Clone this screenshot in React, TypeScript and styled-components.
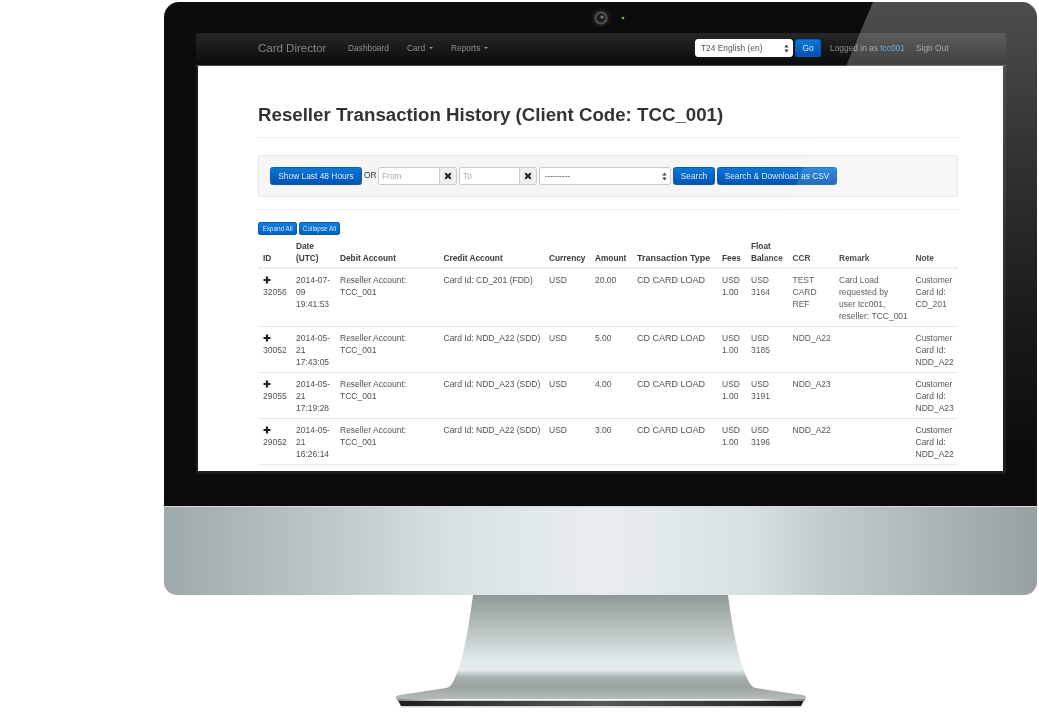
import React from "react";
import styled, { createGlobalStyle } from "styled-components";

const Global = createGlobalStyle`
  html, body { margin: 0; padding: 0; background: #fff; }
  body { font-family: "Liberation Sans", Arial, sans-serif; color: #333; }
`;
const Scene = styled.div`width: 1039px; height: 713px; padding: 2px 0 0 164px; box-sizing: border-box; overflow: hidden; display: flex; flex-direction: column;`;
const Monitor = styled.div`position: relative; width: 873px; display: flex; flex-direction: column;`;
const Bezel = styled.div`height: 505px; box-sizing: border-box; background: #0c0c0c; border-radius: 15px 15px 0 0; display: flex; flex-direction: column; align-items: center; border-bottom: 1px solid #d5dcdc;`;
const CameraBar = styled.div`height: 31px; flex: none; width: 100%; display: flex; justify-content: center; align-items: center;`;
const Gloss = styled.svg`position: absolute; left: 0; top: 0; pointer-events: none;`;
const ScreenFrame = styled.div`width: 810px; margin-left: 1px; height: 441px; flex: none; box-sizing: border-box; background: #1c1c1c; border-radius: 3px 3px 0 0; padding: 0 3px 3px 2px; display: flex; flex-direction: column;`;
const NavBar = styled.div`height: 33px; flex: none; margin: 0 -3px 0 -2px; padding: 0 0 2px 62px; background: linear-gradient(#262626, #0b0b0b); border-radius: 3px 3px 0 0; border-bottom: 1px solid #4c4c4c; box-sizing: border-box; display: flex; align-items: center; font-size: 8.4px; color: #8f8f8f; filter: blur(.25px);`;
const Brand = styled.span`font-size: 11.5px; color: #858585; width: 90px;`;
const NavLink = styled.span<{ $w: number }>`width: ${p => p.$w}px; display: inline-flex; align-items: center; gap: 4px;`;
const Caret = styled.i`width: 0; height: 0; border-left: 2.5px solid transparent; border-right: 2.5px solid transparent; border-top: 2.5px solid #999;`;
const Spacer = styled.div`flex: 1;`;
const SelectBox = styled.div<{ $w: number; $h: number }>`width: ${p => p.$w}px; height: ${p => p.$h}px; box-sizing: border-box; background: #fff; border: 1px solid #ccc; border-radius: 3px; display: flex; align-items: center; justify-content: space-between; padding: 0 3px 0 5px; font-size: 8.4px; color: #555; flex: none;`;
const NavSelect = styled(SelectBox)`border-color: #fff;`;
const Btn = styled.div<{ $w: number }>`width: ${p => p.$w}px; height: 18px; flex: none; box-sizing: border-box; display: flex; align-items: center; justify-content: center; font-size: 8.4px; color: #dcebf8; background: linear-gradient(#0a78d8, #0052b4); border: 1px solid #0a5cb0; border-radius: 2.5px;`;
const GoBtn = styled(Btn)`margin: 0 9px 0 2px;`;
const NavUser = styled.span`white-space: nowrap; width: 86px;`;
const UserLink = styled.span`color: #2d9bd0;`;
const NavEnd = styled.span`margin-right: 58px; width: 32px; white-space: nowrap;`;
const Page = styled.div`flex: 1; background: #fff; overflow: hidden; padding: 0 45px 0 60px; filter: blur(.25px);`;
const Title = styled.h1`margin: 0; padding: 37px 0 10px; height: 72px; box-sizing: border-box; border-bottom: 1px solid #eee; font-size: 18.7px; line-height: 24px; font-weight: 700; color: #333; white-space: nowrap;`;
const Well = styled.div`margin-top: 17px; height: 42px; box-sizing: border-box; background: #f5f5f5; border: 1px solid #e6e6e6; border-radius: 3px; padding: 11px 0 0 11px; display: flex; align-items: flex-start; gap: 2px;`;
const OrText = styled.span`font-size: 8.4px; line-height: 17px; color: #333; width: 12px; text-align: center; flex: none;`;
const InputGroup = styled.div<{ $w: number }>`width: ${p => p.$w}px; height: 18px; flex: none; display: flex; box-sizing: border-box; border: 1px solid #ccc; border-radius: 2.5px; background: #fff; overflow: hidden;`;
const InputText = styled.span`flex: 1; padding-left: 3px; font-size: 8.4px; line-height: 16px; color: #aaa;`;
const Addon = styled.span`width: 16px; background: #eee; border-left: 1px solid #ccc; display: flex; align-items: center; justify-content: center; flex: none;`;
const Rule = styled.div`margin-top: 12px; border-top: 1px solid #eee;`;
const SmallRow = styled.div`margin-top: 12px; display: flex; gap: 2px;`;
const SmallBtn = styled(Btn)`height: 13px; font-size: 6.4px; border-radius: 2px; background: linear-gradient(#1280dc, #0060c0); color: #cfe4f7;`;
const Table = styled.table`width: 700px; table-layout: fixed; border-collapse: collapse; font-size: 8.5px; line-height: 12px; margin-top: 2px; color: #505050;`;
const Th = styled.th<{ $wide: boolean }>`text-align: left; vertical-align: bottom; padding: 3px 0 3px 5px; font-weight: 700; font-size: ${p => (p.$wide ? 9 : 8.3)}px; color: #3a3a3a; border-bottom: 2px solid #eee;`;
const Td = styled.td<{ $wide: boolean }>`vertical-align: top; padding: 5px 0 4px 5px; font-size: ${p => (p.$wide ? 9 : 8.5)}px; border-bottom: 1px solid #e8e8e8; word-wrap: break-word; white-space: pre-line;`;
const PlusBox = styled.div`height: 12px; display: flex; align-items: center;`;
const Chin = styled.div`height: 88px; flex: none; border-radius: 0 0 13px 13px; background: linear-gradient(90deg, #a0a9aa 0%, #b8c1c2 15%, #d8e0e1 33%, #e8eef0 50%, #d8e0e1 67%, #c0c9ca 77%, #98a1a1 100%);`;
const Stand = styled.svg`display: block; margin-left: 232px; flex: none;`;
const Col = styled.col<{ $w: number }>`width: ${p => p.$w}px;`;

const colWidths = [33, 44, 103.5, 105.5, 46, 42, 85, 29, 41.5, 46.5, 76.5, 47.5];
const headers = ["ID", "Date (UTC)", "Debit Account", "Credit Account", "Currency", "Amount", "Transaction Type", "Fees", "Float Balance", "CCR", "Remark", "Note"];
const rows = [
  ["32056", "2014-07-09 19:41:53", "Reseller Account: TCC_001", "Card Id: CD_201 (FDD)", "USD", "20.00", "CD CARD LOAD", "USD 1.00", "USD 3164", "TEST CARD REF", "Card Load\nrequested by\nuser tcc001,\nreseller: TCC_001", "Customer Card Id: CD_201"],
  ["30052", "2014-05-21 17:43:05", "Reseller Account: TCC_001", "Card Id: NDD_A22 (SDD)", "USD", "5.00", "CD CARD LOAD", "USD 1.00", "USD 3185", "NDD_A22", "", "Customer Card Id: NDD_A22"],
  ["29055", "2014-05-21 17:19:28", "Reseller Account: TCC_001", "Card Id: NDD_A23 (SDD)", "USD", "4.00", "CD CARD LOAD", "USD 1.00", "USD 3191", "NDD_A23", "", "Customer Card Id: NDD_A23"],
  ["29052", "2014-05-21 16:26:14", "Reseller Account: TCC_001", "Card Id: NDD_A22 (SDD)", "USD", "3.00", "CD CARD LOAD", "USD 1.00", "USD 3196", "NDD_A22", "", "Customer Card Id: NDD_A22"],
];

const UpDown = () => (
  <svg width="5" height="9" viewBox="0 0 5 9"><path d="M2.5 0.5L4.7 3.5H.3zM2.5 8.5L.3 5.5H4.7z" fill="#444" /></svg>
);
const Cross = () => (
  <svg width="8" height="8" viewBox="0 0 8 8"><path d="M1.2 1.2L6.8 6.8M6.8 1.2L1.2 6.8" stroke="#222" strokeWidth="2.1" /></svg>
);
const Plus = () => (
  <svg width="8" height="8" viewBox="0 0 8 8"><path d="M4 .5V7.5M.5 4H7.5" stroke="#222" strokeWidth="2.2" /></svg>
);

export default function App() {
  return (
    <Scene>
      <Global />
      <Monitor>
        <Bezel>
          <CameraBar>
            <svg width="60" height="31" viewBox="0 0 60 31">
              <defs>
                <radialGradient id="lens" cx=".5" cy=".5" r=".5">
                  <stop offset="0" stopColor="#151515" />
                  <stop offset=".55" stopColor="#222" />
                  <stop offset=".78" stopColor="#565656" />
                  <stop offset="1" stopColor="#2e2e2e" />
                </radialGradient>
              </defs>
              <circle cx="30" cy="16" r="10" fill="#161616" />
              <circle cx="30" cy="16" r="7" fill="url(#lens)" />
              <circle cx="31" cy="15" r="1.6" fill="#7c7c7c" />
              <circle cx="52" cy="16" r="1.3" fill="#6fc21c" />
            </svg>
          </CameraBar>
          <ScreenFrame>
            <NavBar>
              <Brand>Card Director</Brand>
              <NavLink $w={59}>Dashboard</NavLink>
              <NavLink $w={44}>Card <Caret /></NavLink>
              <NavLink $w={50}>Reports <Caret /></NavLink>
              <Spacer />
              <NavSelect $w={98} $h={18}>T24 English (en)<UpDown /></NavSelect>
              <GoBtn $w={26}>Go</GoBtn>
              <NavUser>Logged in as <UserLink>tcc001</UserLink></NavUser>
              <NavEnd>Sign Out</NavEnd>
            </NavBar>
            <Page>
              <Title>Reseller Transaction History (Client Code: TCC_001)</Title>
              <Well>
                <Btn $w={92}>Show Last 48 Hours</Btn>
                <OrText>OR</OrText>
                <InputGroup $w={79}><InputText>From</InputText><Addon><Cross /></Addon></InputGroup>
                <InputGroup $w={78}><InputText>To</InputText><Addon><Cross /></Addon></InputGroup>
                <SelectBox $w={132} $h={18}>---------<UpDown /></SelectBox>
                <Btn $w={42}>Search</Btn>
                <Btn $w={120}>Search &amp; Download as CSV</Btn>
              </Well>
              <Rule />
              <SmallRow>
                <SmallBtn $w={39}>Expand All</SmallBtn>
                <SmallBtn $w={41}>Collapse All</SmallBtn>
              </SmallRow>
              <Table>
                <colgroup>{colWidths.map((w, i) => <Col key={i} $w={w} />)}</colgroup>
                <thead>
                  <tr>{headers.map((h, i) => <Th key={h} $wide={i === 6}>{h}</Th>)}</tr>
                </thead>
                <tbody>
                  {rows.map(r => (
                    <tr key={r[0]}>
                      {r.map((c, i) => (
                        <Td key={i} $wide={i === 6}>{i === 0 && <PlusBox><Plus /></PlusBox>}{c}</Td>
                      ))}
                    </tr>
                  ))}
                </tbody>
              </Table>
            </Page>
          </ScreenFrame>
        </Bezel>
        <Chin />
        <Gloss width="873" height="505" viewBox="0 0 873 505">
          <defs>
            <linearGradient id="gl" x1="0" y1="0" x2="0" y2="1">
              <stop offset="0" stopColor="#fff" stopOpacity=".27" />
              <stop offset=".3" stopColor="#fff" stopOpacity=".16" />
              <stop offset=".62" stopColor="#fff" stopOpacity=".06" />
              <stop offset=".9" stopColor="#fff" stopOpacity="0" />
            </linearGradient>
          </defs>
          <path d="M709 0H858Q873 0 873 15V503H497Z" fill="url(#gl)" />
        </Gloss>
      </Monitor>
      <Stand width="410" height="116" viewBox="0 0 410 116">
        <defs>
          <linearGradient id="neck" x1="0" y1="0" x2="0" y2="1">
            <stop offset="0" stopColor="#8f9797" />
            <stop offset=".17" stopColor="#a5adad" />
            <stop offset=".43" stopColor="#c5cdcd" />
            <stop offset=".6" stopColor="#e0e7e8" />
            <stop offset=".72" stopColor="#e6ecee" />
            <stop offset=".79" stopColor="#a8b0b0" />
            <stop offset=".88" stopColor="#9aa2a2" />
            <stop offset="1" stopColor="#b5bcbc" />
          </linearGradient>
          <linearGradient id="bar" x1="0" y1="0" x2="1" y2="0">
            <stop offset="0" stopColor="#1d1f1f" />
            <stop offset=".5" stopColor="#555a5a" />
            <stop offset="1" stopColor="#1d1f1f" />
          </linearGradient>
          <linearGradient id="edge" x1="0" y1="0" x2="1" y2="0">
            <stop offset="0" stopColor="#7f8787" />
            <stop offset=".12" stopColor="#f4f7f7" />
            <stop offset=".88" stopColor="#f4f7f7" />
            <stop offset="1" stopColor="#7f8787" />
          </linearGradient>
          <filter id="soft"><feGaussianBlur stdDeviation="1.2" /></filter>
        </defs>
        <rect x="5" y="109" width="400" height="3" fill="#888" opacity=".5" filter="url(#soft)" />
        <path d="M2 105.5H408L405 111H5Z" fill="url(#bar)" />
        <path d="M0 102.5Q0 100.5 4 100L50 93Q55 92 58 85C66 68 71 45 77 0H332C338 45 344 68 352 85Q355 92 360 93L406 100Q410 100.5 410 102.5V104H0Z" fill="url(#neck)" />
        <rect x="1" y="104" width="408" height="1.6" fill="url(#edge)" />
      </Stand>
    </Scene>
  );
}
